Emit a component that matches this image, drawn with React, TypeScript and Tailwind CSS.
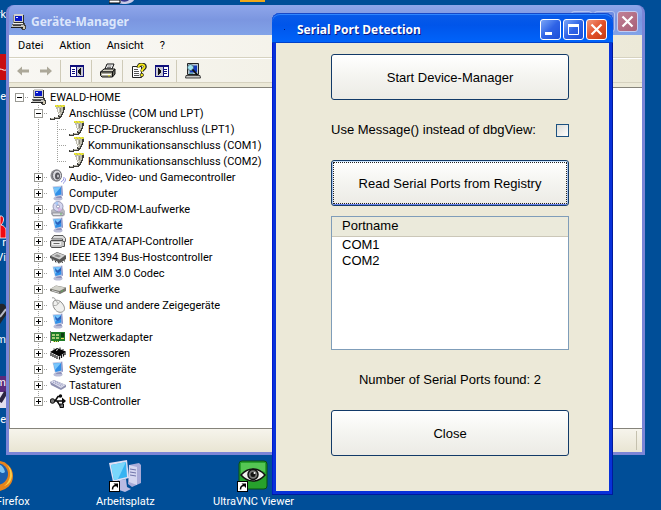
import React, { ReactNode, useState } from 'react';
import clsx from 'clsx';

const uiFont = "font-['Roboto','Noto_Sans',sans-serif]";

/* ---------- device icons, 16x16 ---------- */

const Svg = ({ children, crisp }: { children: ReactNode; crisp?: boolean }) => (
  <svg
    viewBox="0 0 16 16"
    className="block h-4 w-4 shrink-0"
    shapeRendering={crisp ? 'crispEdges' : 'auto'}
    fill="none"
    aria-hidden="true"
  >
    {children}
  </svg>
);

const WorkstationIcon = () => (
  <Svg crisp>
    <path d="M3 0h9v9H3z" fill="#d0d0cc" />
    <path d="M12 1h1v9h-1zM3 8h9v1H3z" fill="#303030" />
    <path d="M2 1h1v8H2z" fill="#8a8a8a" />
    <path d="M4 2h7v5H4z" fill="#0818c8" />
    <path d="M5 3h2v1H5z" fill="#e8f0ff" />
    <path d="M2 9h10v1H2z" fill="#f0f0ee" />
    <path d="M1 10h12v1H1z" fill="#606060" />
    <path d="M1 11h12v2H1z" fill="#c4c4c0" />
    <path d="M2 11h8v1H2z" fill="#404040" />
    <path d="M0 13h12v1H0z" fill="#202020" />
    <path d="M13 9h1v2h1v4h-1v1h-3v-1h-1v-1h2v-2h1z" fill="#404040" />
    <path d="M12 12h2v3h-2z" fill="#d0c8b0" />
  </Svg>
);

const PortIcon = () => (
  <Svg crisp>
    <path d="M6 2h9v3h-1v3h-1v2h-1v2h-1v1h-1v1H5v1H0v-2h4v-1h4v-2h1V9H8V7H7V4H6z" fill="#3e3e3a" />
    <path d="M6 2h7v2H6zM7 4h6v3H7zM8 7h4v2H8zM9 9h2v2H9zM5 12h4v1H5zM1 13h3v1H1z" fill="#bdbbae" />
    <path d="M8 3h1v4H8zM9 8h1v1H9z" fill="#f6f5ee" />
    <path d="M10 3h1v4h-1z" fill="#8b897e" />
    <path d="M5 0h10v2H5z" fill="#b9b668" />
    <path d="M5 0h2v1H5zM8 0h2v1H8zM11 0h2v1h-2zM14 0h1v1h-1zM6 1h2v1H6zM9 1h2v1H9zM12 1h2v1h-2z" fill="#f0ec28" />
  </Svg>
);

const SpeakerIcon = () => (
  <Svg>
    <ellipse cx="6" cy="6.500" rx="5.500" ry="6" fill="#8c8c92" />
    <ellipse cx="7" cy="6.500" rx="4.500" ry="5.500" fill="#d9d9de" stroke="#66666c" />
    <ellipse cx="7.500" cy="7" rx="2.500" ry="3.500" fill="#55555c" />
    <ellipse cx="8" cy="7" rx="1" ry="1.500" fill="#c4c4ca" />
    <path d="M11 13c2-1 3-2.500 3-5M13 14.500c2-1.500 2.500-3 2.500-5" stroke="#8b8fe0" />
  </Svg>
);

const DisplayIcon = ({ dark }: { dark?: boolean }) => (
  <Svg>
    <ellipse cx="8" cy="13.500" rx="4.500" ry="2" fill="#b9bcd6" />
    <path d="M7 10h4l1 3H6z" fill="#8f92bb" />
    <path d="M2.500 1.500L12.500 .5l.5 10-8 1.500z" fill="#c3cbe4" />
    <path d="M3.500 2.500l7.500-.5.500 7.500-6 1.500z" fill="#2f8fe8" />
    <path d="M3.500 2.500l7.500-.5L5 9z" fill="#79c6fb" />
    <path d="M12 .5l1 10-1.200.5L11 1.500z" fill="#8890c4" />
    {dark && <path d="M5 3l2.500 2.500L11 3v2.500L8 8 5.500 6.500z" fill="#2a62bc" />}
  </Svg>
);

const DiscIcon = () => (
  <Svg>
    <path d="M1 9l4-2h8l2 3v4l-2 1.500H3L1 13z" fill="#b7b7bf" />
    <path d="M2 12h11v2.500H3z" fill="#e4e4e8" stroke="#777780" strokeWidth=".6" />
    <circle cx="8" cy="5.500" r="5" fill="#d4d6ee" stroke="#8888a8" strokeWidth=".8" />
    <path d="M8 5.500L4.500 2A5 5 0 018 .5z" fill="#a8c8f4" />
    <path d="M8 5.500l4 3a5 5 0 01-4 2z" fill="#d8b4e0" />
    <circle cx="8" cy="5.500" r="1.500" fill="#fff" stroke="#7878a0" strokeWidth=".7" />
    <path d="M10 13h2" stroke="#58a858" />
  </Svg>
);

const IdeIcon = () => (
  <Svg>
    <path d="M4 2.500h9l2.500 3v3h-3V6H1.500z" fill="#dcdcdc" stroke="#5a5a5a" />
    <path d="M1 7.500h11l2.500 1.500v4.500h-2L11 14.500H1.500L.5 13V8z" fill="#c6c6c6" stroke="#4e4e4e" />
    <path d="M2 9h9v3H2z" fill="#f1f1f1" />
    <path d="M3.500 10.500h6" stroke="#666" />
  </Svg>
);

const FirewireIcon = () => (
  <Svg>
    <path d="M0 7l7-4 9 3.500V10l-6 4-10-5z" fill="#555" />
    <path d="M1 7l6-3.500 8 3-5.500 4z" fill="#d0d0d0" />
    <path d="M4 7l3-1.700L11 7 9 8.500z" fill="#8e8e8e" />
    <path d="M2 10l1 2M5 11.500l1 2M8 13l1 1.500M12 12.500l.5 1.500M14 11l.5 1.500" stroke="#3a3a3a" />
  </Svg>
);

const DriveIcon = () => (
  <Svg>
    <path d="M0 8l6-3.500 10 2V10l-6 3L0 10z" fill="#77776f" />
    <path d="M.5 7.800L6 4.800l9.500 2L9.500 10z" fill="#d3d3cb" />
    <path d="M2 9.500l7 2" stroke="#cfcfcf" />
    <path d="M11 10.500l2-1" stroke="#5fae5c" />
  </Svg>
);

const MouseIcon = () => (
  <Svg>
    <path d="M2 1c2-1 4 1 3 3" stroke="#8c8c8c" />
    <path d="M3 6c0-3 5-4 8-1 2.500 2.500 4.500 6 3 8.500S8 16 5.500 13 3 8.500 3 6z" fill="#f0f0ee" stroke="#8e8e8c" />
    <path d="M3.500 8.500c3 .5 5-1 6-4M6.500 4l1.500 3" stroke="#9c9c9a" strokeWidth=".8" />
  </Svg>
);

const NetworkIcon = () => (
  <Svg crisp>
    <path d="M1 3h14v9H9v1H3v-1H1z" fill="#1f7d27" />
    <path d="M0 2h1v12H0z" fill="#7a7a7a" />
    <path d="M2 5h3v2H2zM6 5h3v2H6zM2 8h3v2H2zM6 8h3v2H6z" fill="#a8cc78" />
    <path d="M11 4h3v4h-3z" fill="#0d3f13" />
    <path d="M11 9h3v1h-3zM3 12h1v1H3zM5 12h1v1H5zM7 12h1v1H7z" fill="#e8d85c" />
  </Svg>
);

const ChipIcon = () => (
  <Svg>
    <path d="M0 7l7-4 9 3.500-6.500 5z" fill="#050505" />
    <path d="M6 5.500l2-1" stroke="#eee" />
    <path
      d="M1 8v3M3 9v3M5 10v3M7 11v3M9.500 11.500v3M11.500 10v3M13.500 8.500v3M15 7v3"
      stroke="#111"
      strokeWidth="1.200"
    />
    <path d="M4 3.500v1M10 2.500v2M13 4v1" stroke="#111" />
  </Svg>
);

const KeyboardIcon = () => (
  <Svg>
    <path d="M0 5l4-2 12 5v2l-5 3L1 8z" fill="#8d8fb0" />
    <path d="M.5 5L4 3.500 15.500 8 11 11z" fill="#dfe0ee" />
    <path d="M3 5l9 4.500M5 4.500l8 3.800" stroke="#8f91bb" strokeDasharray="1.200 .8" />
  </Svg>
);

const UsbIcon = () => (
  <Svg>
    <path d="M2 8h12M5 8l3-4.500h2M7 8l3 4.500h1.500" stroke="#0a0a0a" strokeWidth="1.500" />
    <circle cx="2.500" cy="8" r="2.300" fill="#777" stroke="#0a0a0a" />
    <path d="M12 4.500L16 8l-4 3.500z" fill="#0a0a0a" />
    <circle cx="10.500" cy="3" r="1.700" fill="#0a0a0a" />
    <path d="M10 11h3.500v3.500H10z" fill="#777" stroke="#0a0a0a" />
  </Svg>
);

/* ---------- toolbar icons ---------- */

const ArrowIcon = ({ flip }: { flip?: boolean }) => (
  <Svg>
    <path
      d={flip ? 'M14 8L9 3.500v3H2v3h7v3z' : 'M2 8l5-4.500v3h7v3H7v3z'}
      fill="#aca899"
    />
  </Svg>
);

const PaneIcon = ({ right }: { right?: boolean }) => (
  <Svg crisp>
    <path d="M1 2h14v12H1z" fill="#10107c" />
    <path d="M2 4h12v9H2z" fill="#fff" />
    <path d={right ? 'M2 4h7v9H2z' : 'M7 4h7v9H7z'} fill="#c9c9d4" />
    <path
      d={right ? 'M10 6h3v1h-3zM10 8h3v1h-3zM10 10h3v1h-3z' : 'M3 6h3v1H3zM3 8h3v1H3zM3 10h3v1H3z'}
      fill="#10107c"
    />
    <path d={right ? 'M9 4h1v9H9z' : 'M7 4h1v9H7z'} fill="#10107c" />
    <path d={right ? 'M4 5h1v1h1v1h1v3H6v1H5v1H4z' : 'M12 5h-1v1h-1v1H9v3h1v1h1v1h1z'} fill="#111" />
  </Svg>
);

const PrinterIcon = () => (
  <Svg>
    <path d="M5 6l2-5h7l-2 5z" fill="#fff" stroke="#111" />
    <path d="M7.500 3h4M7 4.500h4" stroke="#555" strokeWidth=".8" />
    <path d="M.5 9L4 6h11l-2.500 3z" fill="#d4d2c4" stroke="#111" />
    <path d="M.5 9h12v5H2L.5 12.500z" fill="#aaa898" stroke="#111" />
    <path d="M12.500 9L15 6v5l-2.500 3z" fill="#6b6b60" stroke="#111" />
    <path d="M2 11.500h9" stroke="#fff" />
    <path d="M8 12.800h2" stroke="#dfdc20" />
  </Svg>
);

const HelpIcon = () => (
  <Svg>
    <path d="M1.500 3.500h9v11h-9z" fill="#fff" stroke="#222" />
    <path d="M3 6.500h4M3 8.500h5M3 10.500h5M3 12.500h5" stroke="#555" />
    <path d="M7.500 4.500c-.5-4.500 7-4 6.500-.5-.5 2-3 2-3 4.500" stroke="#222" strokeWidth="3.500" />
    <path d="M7.500 4.500c-.5-4 6.500-4 6-.5-.5 2-2.700 2-2.700 4.500" stroke="#f4e91c" strokeWidth="2" />
    <circle cx="10.800" cy="12" r="1.700" fill="#f4e91c" stroke="#222" strokeWidth=".8" />
  </Svg>
);

const ScanIcon = () => (
  <Svg>
    <path d="M2.500 .5h11v11h-11z" fill="#b8c8d0" stroke="#222" />
    <path d="M6 2.500h6v7H4.500z" fill="#1238b8" />
    <path d="M1 12.500h14l.5 2.500H.5z" fill="#c6c6c2" stroke="#222" strokeWidth=".8" />
    <circle cx="5.500" cy="4.500" r="3" fill="#9fe4ee" stroke="#456" strokeWidth=".8" />
    <path d="M7.500 6.500l5 5.500" stroke="#111" strokeWidth="1.800" />
    <path d="M4 10.500h4" stroke="#58a8b0" />
  </Svg>
);

/* ---------- device tree ---------- */

type Device = { label: string; icon: ReactNode; children?: Device[]; closed?: boolean };

const devices: Device[] = [
  {
    label: 'Anschlüsse (COM und LPT)',
    icon: <PortIcon />,
    children: [
      { label: 'ECP-Druckeranschluss (LPT1)', icon: <PortIcon /> },
      { label: 'Kommunikationsanschluss (COM1)', icon: <PortIcon /> },
      { label: 'Kommunikationsanschluss (COM2)', icon: <PortIcon /> },
    ],
  },
  { label: 'Audio-, Video- und Gamecontroller', icon: <SpeakerIcon />, closed: true },
  { label: 'Computer', icon: <DisplayIcon />, closed: true },
  { label: 'DVD/CD-ROM-Laufwerke', icon: <DiscIcon />, closed: true },
  { label: 'Grafikkarte', icon: <DisplayIcon dark />, closed: true },
  { label: 'IDE ATA/ATAPI-Controller', icon: <IdeIcon />, closed: true },
  { label: 'IEEE 1394 Bus-Hostcontroller', icon: <FirewireIcon />, closed: true },
  { label: 'Intel AIM 3.0 Codec', icon: <DisplayIcon dark />, closed: true },
  { label: 'Laufwerke', icon: <DriveIcon />, closed: true },
  { label: 'Mäuse und andere Zeigegeräte', icon: <MouseIcon />, closed: true },
  { label: 'Monitore', icon: <DisplayIcon dark />, closed: true },
  { label: 'Netzwerkadapter', icon: <NetworkIcon />, closed: true },
  { label: 'Prozessoren', icon: <ChipIcon />, closed: true },
  { label: 'Systemgeräte', icon: <DisplayIcon />, closed: true },
  { label: 'Tastaturen', icon: <KeyboardIcon />, closed: true },
  { label: 'USB-Controller', icon: <UsbIcon />, closed: true },
];

interface BranchProps {
  up?: boolean;
  down?: boolean;
  across?: boolean;
  box?: 'plus' | 'minus';
}

// One 19x16 cell of the dotted connector lines, with the optional +/- box
const Branch = ({ up, down, across, box }: BranchProps) => (
  <svg viewBox="0 0 19 16" className="block h-4 w-[19px] shrink-0" shapeRendering="crispEdges" aria-hidden="true">
    <g stroke="#a0a09c" strokeDasharray="1 1">
      {up && <path d="M9.500 0v8" />}
      {down && <path d="M9.500 8v8" />}
      {across && <path d="M9 8.500h10" />}
    </g>
    {box && (
      <>
        <rect x="5.500" y="4.500" width="8" height="8" fill="#fff" stroke="#9a9a94" />
        <path d={box === 'plus' ? 'M7 8.500h5M9.500 6v5' : 'M7 8.500h5'} stroke="#000" />
      </>
    )}
  </svg>
);

const TreeRow = ({ device, depth, last }: { device: Device; depth: number; last: boolean }) => {
  const box = device.children ? 'minus' : device.closed ? 'plus' : undefined;
  const branch = <Branch up={depth > 0} down={depth > 0 && !last} across box={box} />;

  return (
    <li>
      <div className="flex h-4 items-center whitespace-nowrap">
        {depth > 0 && <span className="w-[19px] shrink-0" />}
        {depth > 1 && <Branch up down />}
        {box ? <button aria-label={device.label}>{branch}</button> : branch}
        <span className="flex w-[19px] shrink-0 pl-0.5">{device.icon}</span>
        <span className="pt-px pl-0.5">{device.label}</span>
      </div>
      {device.children && (
        <ul>
          {device.children.map((child, i) => (
            <TreeRow
              key={child.label}
              device={child}
              depth={depth + 1}
              last={i === device.children!.length - 1}
            />
          ))}
        </ul>
      )}
    </li>
  );
};

const rootDevice: Device = { label: 'EWALD-HOME', icon: <WorkstationIcon />, children: devices };

const Tree = () => (
  <ul className={clsx('text-[11px] leading-4 text-black', uiFont)}>
    <TreeRow device={rootDevice} depth={0} last />
  </ul>
);

/* ---------- windows ---------- */

const ToolButton = ({ label, children }: { label: string; children: ReactNode }) => (
  <button aria-label={label} className="flex h-[22px] w-[23px] items-center justify-center">
    {children}
  </button>
);

const ToolDivider = () => <span className="mr-1 ml-[3px] h-[22px] w-px bg-[#cfcbb8]" />;

const CaptionButton = ({ kind, inactive }: { kind: 'min' | 'max' | 'close'; inactive?: boolean }) => (
  <button
    aria-label={kind}
    className={clsx(
      'flex h-[21px] w-[21px] items-center justify-center rounded-[3px] border bg-linear-to-br',
      inactive
        ? kind === 'close'
          ? 'border-[#c3cdf2] from-[#c08095] to-[#a86078]'
          : 'border-[#b4c4f0] from-[#7d9cec] to-[#5c7cd8]'
        : kind === 'close'
          ? 'border-white from-[#f0967a] via-[#e2512a] to-[#c63a12]'
          : 'border-white from-[#7ba4f6] via-[#2f63e6] to-[#1c4fd8]'
    )}
  >
    <svg viewBox="0 0 19 19" className="h-[19px] w-[19px]" fill="none" stroke="#fff" aria-hidden="true">
      {kind === 'min' && <path d="M4 13.500h7" strokeWidth="3" />}
      {kind === 'max' && <path d="M4.500 4v10.500h10V4" />}
      {kind === 'max' && <path d="M4 5.500h11" strokeWidth="3" />}
      {kind === 'close' && <path d="M4.500 4.500l10 10M14.500 4.500l-10 10" strokeWidth="2.200" />}
    </svg>
  </button>
);

const ManagerWindow = () => (
  <section className="absolute top-[5px] right-4 bottom-[55px] left-1.5 flex flex-col rounded-t-lg border-x-[3px] border-b-[3px] border-[#7b85d6] bg-[#7b85d6]">
    <header className="flex h-[30px] shrink-0 items-center rounded-t-md bg-linear-to-b from-[#8fa6ea] via-[#7b96e0] to-[#82a3e8] pt-[3px] pr-1 pl-0.5">
      <WorkstationIcon />
      <h1 className="ml-1 flex-1 font-['Noto_Sans',sans-serif] text-[12px] font-bold text-[#dce6fb]">
        Geräte-Manager
      </h1>
      <div className="flex gap-0.5">
        <CaptionButton kind="min" inactive />
        <CaptionButton kind="max" inactive />
        <CaptionButton kind="close" inactive />
      </div>
    </header>
    <div className="flex min-h-0 flex-1 flex-col bg-[#ece9d8]">
      <nav
        className={clsx(
          'flex h-[23px] shrink-0 items-center gap-4 border-b border-[#d6d2c0] bg-linear-to-r from-[#fbfaf8] to-[#ece9d8] pl-[9px] text-[11px] text-black',
          uiFont
        )}
      >
        <button>Datei</button>
        <button>Aktion</button>
        <button>Ansicht</button>
        <button>?</button>
      </nav>
      <div className="flex h-[25px] shrink-0 items-center border-t border-b border-t-white border-b-[#d6d2c0] bg-linear-to-r from-[#f8f7f3] to-[#ece9d8] pl-0.5">
        <ToolButton label="Zurück">
          <ArrowIcon />
        </ToolButton>
        <ToolButton label="Vorwärts">
          <ArrowIcon flip />
        </ToolButton>
        <ToolDivider />
        <ToolButton label="Konsolenstruktur">
          <PaneIcon />
        </ToolButton>
        <ToolDivider />
        <ToolButton label="Drucken">
          <PrinterIcon />
        </ToolButton>
        <ToolDivider />
        <ToolButton label="Hilfe">
          <HelpIcon />
        </ToolButton>
        <ToolButton label="Aktionsbereich">
          <PaneIcon right />
        </ToolButton>
        <ToolDivider />
        <ToolButton label="Nach geänderter Hardware suchen">
          <ScanIcon />
        </ToolButton>
      </div>
      <main className="mt-1 min-h-0 flex-1 overflow-hidden border border-r-0 border-[#85837a] bg-white pt-px">
        <Tree />
      </main>
      <footer className="flex h-[23px] shrink-0 justify-end bg-linear-to-b from-[#f6f4ec] to-[#e9e5d3] p-0.5">
        <span className="w-1 border-l border-[#c5c1ae]" />
      </footer>
    </div>
  </section>
);

const DialogButton = ({ children, focused }: { children: ReactNode; focused?: boolean }) => (
  <button
    className={clsx(
      'h-[46px] w-full shrink-0 rounded-[3px] border border-[#123a68] bg-linear-to-b from-white via-[#f4f4f0] to-[#ecebe5] p-px',
      focused && 'shadow-[inset_0_1px_#cee7ff,inset_1px_0_#a8c4f0,inset_-1px_0_#a8c4f0,inset_0_-1px_#6982ee]'
    )}
  >
    <span
      className={clsx(
        'flex h-full items-center justify-center border pt-px',
        focused ? 'border-dotted border-[#222]' : 'border-transparent'
      )}
    >
      {children}
    </span>
  </button>
);

const ports = ['COM1', 'COM2'];

const PortDialog = () => {
  const [useMessage, setUseMessage] = useState(false);

  return (
    <section
      role="dialog"
      aria-labelledby="dialog-title"
      className="absolute top-[13px] right-12 left-[272px] rounded-t-lg bg-[#0831d9] shadow-[inset_-1px_-1px_#001a9c,inset_1px_0_#0019cf]"
    >
      <header className="flex h-[30px] items-center gap-0.5 rounded-t-lg bg-linear-to-b from-[#0a5be8] via-[#0055ea] via-40% to-[#0064fb] pt-[3px] pr-1.5 pl-3 shadow-[inset_0_1px_#1648c8,inset_0_2px_#2f86ff,inset_0_-1px_#0040c8]">
        <span className="h-px w-px bg-[#001c70]" />
        <h2
          id="dialog-title"
          className="ml-2.5 flex-1 pt-px font-['Noto_Sans',sans-serif] text-[12px] font-bold text-white [text-shadow:1px_1px_#0a1883]"
        >
          Serial Port Detection
        </h2>
        <CaptionButton kind="min" />
        <CaptionButton kind="max" />
        <CaptionButton kind="close" />
      </header>
      <div className="mx-1 flex flex-col bg-[#ece9d8] pt-[11px] pr-10 pb-[35px] pl-[55px] font-['Liberation_Sans',Arial,sans-serif] text-[13px] leading-4 text-black">
        <DialogButton>Start Device-Manager</DialogButton>
        <label className="flex h-[60px] items-center justify-between">
          Use Message() instead of dbgView:
          <input
            type="checkbox"
            checked={useMessage}
            onChange={(e) => setUseMessage(e.target.checked)}
            className="h-[13px] w-[13px] appearance-none border border-[#1c5180] bg-linear-to-br from-[#dcdcd7] to-white checked:bg-[#21a121]"
          />
        </label>
        <DialogButton focused>Read Serial Ports from Registry</DialogButton>
        <div className="mt-2.5 h-[134px] border border-[#7f9db9] bg-white">
          <table className="w-full border-collapse text-left">
            <thead>
              <tr className="h-[19px] border-b border-[#cbc7b8] bg-[#ebeadb]">
                <th className="px-2.5 py-0 font-normal">Portname</th>
              </tr>
            </thead>
            <tbody>
              {ports.map((port) => (
                <tr key={port}>
                  <td className="px-2.5 py-0">{port}</td>
                </tr>
              ))}
            </tbody>
          </table>
        </div>
        <p className="flex h-[60px] items-center justify-center">
          Number of Serial Ports found: {ports.length}
        </p>
        <DialogButton>Close</DialogButton>
      </div>
      <div className="h-1" />
    </section>
  );
};

/* ---------- desktop ---------- */

const ShortcutArrow = () => (
  <g>
    <rect x=".5" y="21.500" width="10" height="10" fill="#fff" stroke="#000" />
    <path d="M3.500 29.500c0-3 1-4 3.500-4" stroke="#000" strokeWidth="1.500" fill="none" />
    <path d="M4.500 23.500h4.500v4.500z" fill="#000" />
  </g>
);

const Shortcut = ({ label, className, children }: { label: string; className: string; children: ReactNode }) => (
  <a
    href="#"
    className={clsx('absolute flex flex-col items-center gap-0.5 text-[11px] leading-4 whitespace-nowrap text-white', uiFont, className)}
  >
    <svg viewBox="0 0 32 32" className="h-8 w-8" aria-hidden="true">
      {children}
    </svg>
    {label}
  </a>
);

// Ends of icon captions that stick out left of the manager window
const captionEnds = [
  { text: 'rk', place: 'top-[7px]' },
  { text: 'e', place: 'top-[89px]' },
  { text: 'r', place: 'top-[235px]' },
  { text: 'Vi', place: 'top-[250px]' },
  { text: 'm', place: 'top-[332px]' },
  { text: 'm', place: 'top-[375px]' },
  { text: 'e', place: 'top-[412px]' },
];

export default function App() {
  return (
    <div className="relative h-screen overflow-hidden bg-[#004e98]">
      <svg viewBox="0 0 6 450" className="absolute top-0 left-0 h-[450px] w-1.5" aria-hidden="true">
        <path d="M0 54h6v26H0z" fill="#c80d12" />
        <path d="M0 69c2 0 4 2 6 1" stroke="#fff" fill="none" />
        <path d="M0 216c4-1 5 5 1 9 4 1 5 4 5 6v7H0z" fill="#f00a10" stroke="#fff" strokeWidth=".8" />
        <path d="M0 304c3-1 5 0 6 3v8l-6 9z" fill="#23252c" />
        <path d="M0 317l6-8" stroke="#b8bcc8" strokeWidth="2" />
        <path d="M0 376h6v16H0z" fill="#5a2a7c" />
        <path d="M0 392h6v16H0z" fill="#e4e0ee" />
        <path d="M0 402l6-10" stroke="#2a2440" strokeWidth="4" />
      </svg>
      {captionEnds.map(({ text, place }) => (
        <span
          key={place}
          className={clsx('absolute left-0 flex w-1.5 justify-end text-[11px] leading-4 text-white', uiFont, place)}
        >
          {text}
        </span>
      ))}
      <svg viewBox="0 0 160 5" className="absolute top-0 left-[109px] h-[5px] w-[160px]" aria-hidden="true">
        <path d="M10 0h15c-2 4-11 5-15 3z" fill="#c9c9e6" />
        <path d="M12 0h8c-2 2-5 2-8 1z" fill="#35358c" />
        <path d="M0 0h11v3H0z" fill="#fff" stroke="#000" />
        <path d="M131 0h25v2h-25z" fill="#f0a818" />
      </svg>

      <Shortcut label="Firefox" className="bottom-0 -left-1">
        <circle cx="1" cy="16" r="15" fill="#e8841c" />
        <circle cx="0" cy="14" r="11" fill="#1d5fae" />
        <path d="M0 4c4 0 7 3 8 8-3 3-5-2-8-1z" fill="#7fc4f2" />
        <path d="M10 5c5 6 4 16-3 21 9-2 11-15 3-21z" fill="#fbd04a" />
      </Shortcut>
      <Shortcut label="Arbeitsplatz" className="bottom-0 left-[96px]">
        <path d="M20 5l10-2 2 2v18l-9 4-4-3z" fill="#a9abd8" />
        <path d="M20 5l8 2v18l-8-3z" fill="#d5d6f0" />
        <path d="M21 9l6 1M21 12l6 1M21 15l6 1" stroke="#7074aa" />
        <path d="M10 20l7-1 1 8 4 2-6 3-6-2z" fill="#b9bbe2" />
        <path d="M0 3l18-3 2 18-16 4z" fill="#dedff4" />
        <path d="M2 5l15-3 1 15-13 3z" fill="#35b3f1" />
        <path d="M2 5l15-3-8 17-4 1z" fill="#7ad7fb" />
        <ShortcutArrow />
      </Shortcut>
      <Shortcut label="UltraVNC Viewer" className="bottom-0 left-[213px]">
        <rect x="2" y="1" width="28" height="28" rx="3" fill="#27a12c" stroke="#0b4f12" />
        <path d="M4 3h24v9C20 9 12 10 4 14z" fill="#55c653" />
        <path d="M4 15c7-8 17-8 24 0-7 8-17 8-24 0z" fill="#f2f2ee" stroke="#111" strokeWidth="1.500" />
        <circle cx="16" cy="14.500" r="5" fill="#777" stroke="#111" strokeWidth="1.500" />
        <circle cx="16" cy="14.500" r="2.500" fill="#111" />
        <circle cx="17.500" cy="13" r="1" fill="#fff" />
        <ShortcutArrow />
      </Shortcut>

      <ManagerWindow />
      <PortDialog />
    </div>
  );
}
